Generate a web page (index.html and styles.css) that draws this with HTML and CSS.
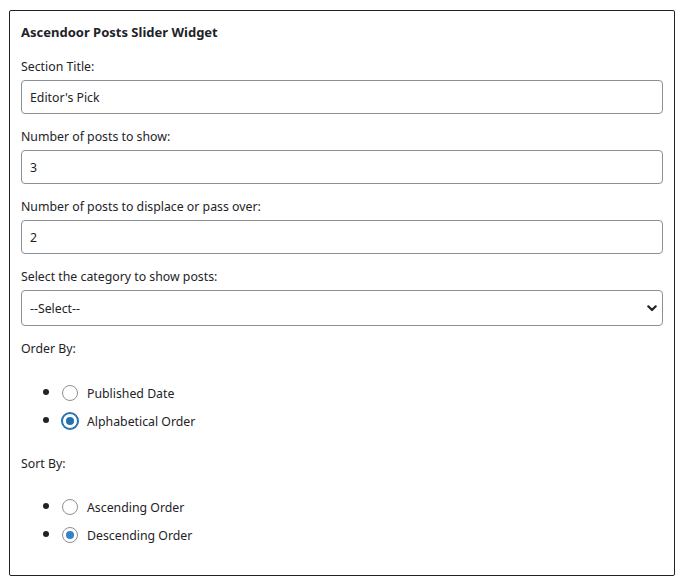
FILE: index.html
```html
<!DOCTYPE html>
<html>
<head>
<meta charset="utf-8">
<link rel="stylesheet" href="styles.css">
</head>
<body>
<div class="widget">
  <h3 class="title">Ascendoor Posts Slider Widget</h3>
  <div class="field">
    <label class="label">Section Title:</label>
    <input class="input" type="text" value="Editor's Pick">
  </div>
  <div class="field">
    <label class="label">Number of posts to show:</label>
    <input class="input" type="text" value="3">
  </div>
  <div class="field">
    <label class="label">Number of posts to displace or pass over:</label>
    <input class="input" type="text" value="2">
  </div>
  <div class="field">
    <label class="label">Select the category to show posts:</label>
    <div class="select-wrap">
      <select class="select"><option>--Select--</option></select>
      <svg class="chev" width="10" height="7" viewBox="0 0 10 7"><path d="M1.3 1.3 L5 5 L8.7 1.3" fill="none" stroke="#1d2327" stroke-width="2.2" stroke-linecap="round" stroke-linejoin="round"/></svg>
    </div>
  </div>
  <div class="group">
    <p class="label">Order By:</p>
    <ul class="radios radios-order">
      <li><span class="radio"></span><span>Published Date</span></li>
      <li><span class="radio checked focus"></span><span>Alphabetical Order</span></li>
    </ul>
  </div>
  <div class="group">
    <p class="label">Sort By:</p>
    <ul class="radios radios-sort">
      <li><span class="radio"></span><span>Ascending Order</span></li>
      <li><span class="radio checked"></span><span>Descending Order</span></li>
    </ul>
  </div>
</div>
</body>
</html>
```
FILE: styles.css
```css
html, body {
  margin: 0;
  padding: 0;
  background: #fff;
}
body {
  padding: 10px 0 0 9px;
  font-family: "Noto Sans", "Open Sans", sans-serif;
  font-size: 12.3px;
  color: #1d2327;
}
.widget {
  box-sizing: border-box;
  width: 666px;
  height: 566px;
  border: 1px solid #1d2327;
  border-radius: 2px;
  padding: 11px 11px 0 11px;
}
.title {
  margin: 0 0 15px 0;
  font-size: 13px;
  font-weight: 700;
  line-height: 20px;
}
.field {
  display: flex;
  flex-direction: column;
  margin-bottom: 13px;
}
.label {
  display: block;
  margin: 0 0 3px 0;
  line-height: 20px;
}
.input, .select {
  box-sizing: border-box;
  width: 642px;
  height: 34px;
  border: 1px solid #8c8f94;
  border-radius: 4px;
  padding: 0 8px;
  font-family: inherit;
  font-size: 12.3px;
  color: #1d2327;
  background: #fff;
  outline: none;
}
.select-wrap {
  position: relative;
  width: 642px;
}
.select {
  height: 36px;
  appearance: none;
  -webkit-appearance: none;
  display: block;
}
.field:last-of-type {
  margin-bottom: 14px;
}
.chev {
  position: absolute;
  right: 6px;
  top: 15px;
}
.group .label {
  margin-bottom: 0;
}
.radios {
  padding-left: 40px;
}
.radios-order {
  margin: 18px 0 21px 0;
}
.radios-sort {
  margin: 17px 0 0 0;
}
.radios li {
  list-style: disc;
  display: list-item;
  height: 28px;
  line-height: 28px;
}
.radios li::marker {
  font-size: 16px;
}
.radios li span {
  vertical-align: middle;
}
.radio {
  display: inline-block;
  box-sizing: border-box;
  width: 16px;
  height: 16px;
  border: 1px solid #8c8f94;
  border-radius: 50%;
  margin: 0 9px 0 1px;
  position: relative;
  top: -1px;
  background: #fff;
}
.radio.checked::after {
  content: "";
  position: absolute;
  left: 3px;
  top: 3px;
  width: 8px;
  height: 8px;
  border-radius: 50%;
  background: #3582c4;
}
.radio.focus {
  border-color: #2271b1;
  box-shadow: 0 0 0 1px #2271b1;
}
.radio.focus::after {
  background: #2271b1;
}
```
